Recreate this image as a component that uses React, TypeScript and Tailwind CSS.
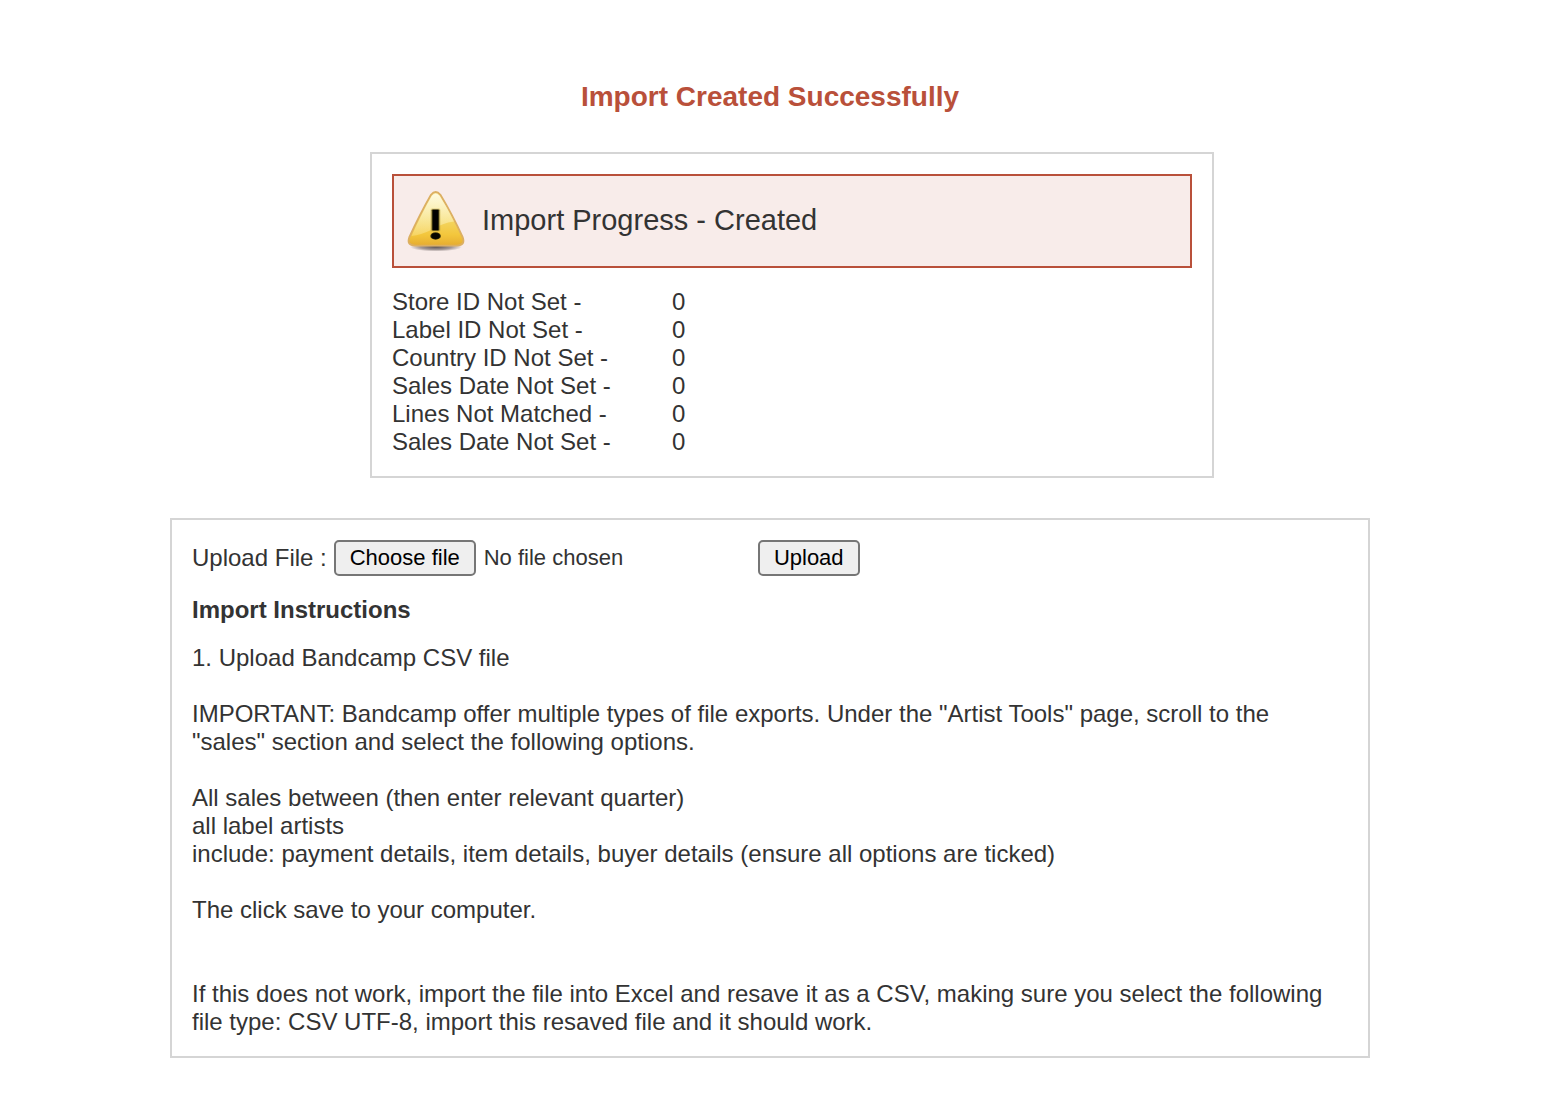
import { useRef, useState } from "react";

const stats = [
  { label: "Store ID Not Set -", value: 0 },
  { label: "Label ID Not Set -", value: 0 },
  { label: "Country ID Not Set -", value: 0 },
  { label: "Sales Date Not Set -", value: 0 },
  { label: "Lines Not Matched -", value: 0 },
  { label: "Sales Date Not Set -", value: 0 },
];

function WarningIcon() {
  return (
    <svg viewBox="0 0 64 64" className="h-16 w-16 shrink-0" aria-hidden="true">
      <defs>
        <linearGradient id="warn-fill" x1="0" y1="0" x2="0" y2="1">
          <stop offset="0" stopColor="#fbeeb0" />
          <stop offset="0.5" stopColor="#f3d765" />
          <stop offset="0.8" stopColor="#f3c63c" />
          <stop offset="1" stopColor="#e6ac30" />
        </linearGradient>
        <linearGradient id="warn-gloss" x1="0" y1="0" x2="0" y2="1">
          <stop offset="0" stopColor="#fffef0" stopOpacity="0.75" />
          <stop offset="1" stopColor="#fff6c0" stopOpacity="0.3" />
        </linearGradient>
        <radialGradient id="warn-shadow">
          <stop offset="0" stopColor="#3a3030" stopOpacity="0.8" />
          <stop offset="0.6" stopColor="#3a3030" stopOpacity="0.45" />
          <stop offset="1" stopColor="#3a3030" stopOpacity="0" />
        </radialGradient>
      </defs>
      <ellipse cx="32" cy="58" rx="26" ry="4.5" fill="url(#warn-shadow)" />
      <path
        d="M27 5.800Q31.700 0.200 36.400 5.800Q48 25 58.800 48.500Q61.500 56.200 53 56.600H11Q2.500 56.200 5.200 48.500Q16 25 27 5.800Z"
        fill="url(#warn-fill)"
        stroke="#dcaf62"
        strokeWidth="1.8"
      />
      <path
        d="M28 6.800Q31.700 2.800 35.400 6.800Q43 18 50 32.500Q38 34 27 41Q17 46 7.500 47Q18 24 28 6.800Z"
        fill="url(#warn-gloss)"
      />
      <rect x="26.600" y="19.400" width="9.800" height="23" rx="1.500" fill="#b59b35" opacity="0.45" />
      <rect x="27.700" y="20.400" width="7.600" height="21.200" rx="0.800" fill="#3d370d" />
      <rect x="28.800" y="20.800" width="5.400" height="20.400" fill="#020200" />
      <ellipse cx="31.600" cy="47" rx="5.300" ry="3.700" fill="#3d350a" />
      <ellipse cx="31.600" cy="47" rx="4.300" ry="2.900" fill="#080700" />
    </svg>
  );
}

function ImportStatus() {
  return (
    <section className="ml-[200px] w-[844px] max-w-full border-2 border-[#d5d5d5] p-5">
      <div className="flex items-center border-2 border-[#b9503a] bg-[#f8ecea] px-2.5 py-[13px]">
        <WarningIcon />
        <p className="ml-3.5 pb-0.5 text-[29px] leading-8">Import Progress - Created</p>
      </div>
      <table className="mt-5 text-left">
        <tbody>
          {stats.map((row, i) => (
            <tr key={i}>
              <th scope="row" className="w-[280px] p-0 font-normal">
                {row.label}
              </th>
              <td className="p-0">{row.value}</td>
            </tr>
          ))}
        </tbody>
      </table>
    </section>
  );
}

function UploadForm() {
  const fileInput = useRef<HTMLInputElement>(null);
  const [fileName, setFileName] = useState("No file chosen");

  return (
    <form className="flex h-9 items-center" onSubmit={(e) => e.preventDefault()}>
      <label htmlFor="import-file">Upload File :</label>
      <input
        ref={fileInput}
        id="import-file"
        type="file"
        accept=".csv"
        className="hidden"
        onChange={(e) => setFileName(e.target.files?.[0]?.name ?? "No file chosen")}
      />
      <div className="ml-[7px] flex w-[424px] items-center gap-2 text-[22px]">
        <button
          type="button"
          onClick={() => fileInput.current?.click()}
          className="h-9 w-[142px] shrink-0 rounded-[5px] border-2 border-[#767676] bg-[#efefef] leading-8 text-black"
        >
          Choose file
        </button>
        <span className="truncate">{fileName}</span>
      </div>
      <button
        type="submit"
        className="h-9 w-[102px] rounded-[5px] border-2 border-[#767676] bg-[#efefef] text-[22px] leading-8 text-black"
      >
        Upload
      </button>
    </form>
  );
}

export default function App() {
  return (
    <main className="min-h-screen bg-white pt-20 pr-0.5 pb-9 font-['Liberation_Sans',Arial,sans-serif] text-[24px] leading-7 text-[#333333]">
      <div className="mx-auto max-w-[1200px]">
        <h1 className="mb-[38px] text-center text-[28px] leading-[34px] font-bold text-[#b9503a]">
          Import Created Successfully
        </h1>

        <ImportStatus />

        <section className="mt-10 border-2 border-[#d5d5d5] p-5">
          <UploadForm />
          <h2 className="my-5 font-bold">Import Instructions</h2>
          <p>1. Upload Bandcamp CSV file</p>
          <p className="mt-7">
            IMPORTANT: Bandcamp offer multiple types of file exports. Under the "Artist Tools" page,
            scroll to the "sales" section and select the following options.
          </p>
          <p className="mt-7">
            All sales between (then enter relevant quarter)
            <br />
            all label artists
            <br />
            include: payment details, item details, buyer details (ensure all options are ticked)
          </p>
          <p className="mt-7">The click save to your computer.</p>
          <p className="mt-14">
            If this does not work, import the file into Excel and resave it as a CSV, making sure you
            select the following file type: CSV UTF-8, import this resaved file and it should work.
          </p>
        </section>
      </div>
    </main>
  );
}
